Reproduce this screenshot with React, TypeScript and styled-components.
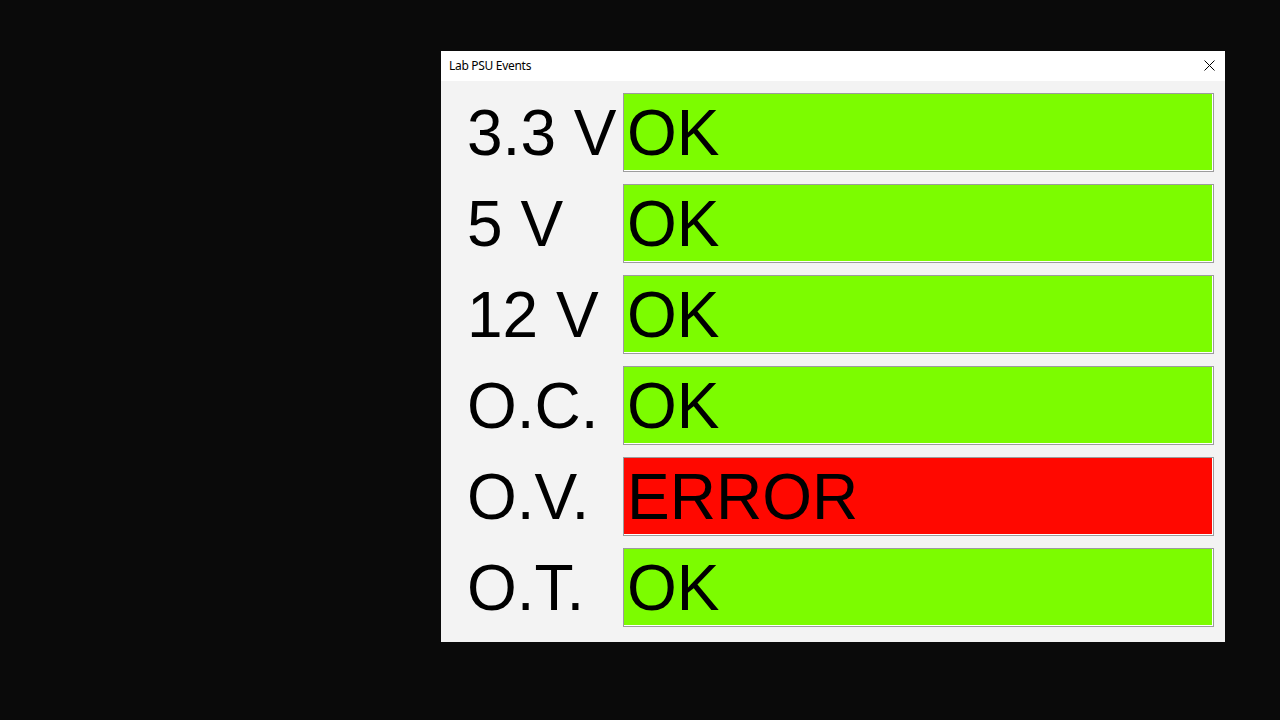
import React from "react";
import styled, { createGlobalStyle } from "styled-components";

const Global = createGlobalStyle`
  html, body { margin: 0; padding: 0; background: #0a0a0a; }
  body { width: 1280px; height: 720px; overflow: hidden; }
`;

const Screen = styled.div`
  width: 1280px;
  height: 720px;
  background: #0a0a0a;
  display: flex;
  align-items: flex-start;
  padding: 51px 0 0 441px;
  box-sizing: border-box;
`;

const Window = styled.div`
  width: 784px;
  height: 591px;
  display: flex;
  flex-direction: column;
  background: #f3f3f3;
`;

const TitleBar = styled.div`
  height: 30px;
  flex: 0 0 30px;
  background: #ffffff;
  display: flex;
  align-items: center;
  justify-content: space-between;
  padding: 0 8px 1px 8px;
  box-sizing: border-box;
`;

const Title = styled.span`
  font-family: "Noto Sans", "Open Sans", sans-serif;
  font-size: 12px;
  color: #000;
  letter-spacing: -0.3px;
`;

const CloseButton = styled.div`
  width: 20px;
  height: 20px;
  display: flex;
  align-items: center;
  justify-content: center;
  margin-right: -2px;
`;

const Body = styled.div`
  flex: 1;
  display: flex;
  flex-direction: column;
  gap: 12px;
  padding: 12px 11px 14px 26px;
  box-sizing: border-box;
`;

const Row = styled.div`
  display: flex;
  align-items: stretch;
  height: 79px;
`;

const Label = styled.div`
  width: 156px;
  flex: 0 0 156px;
  display: flex;
  align-items: center;
  font-family: "Liberation Sans", Arial, sans-serif;
  font-size: 64px;
  color: #000;
  white-space: nowrap;
`;

const Status = styled.div<{ $error?: boolean }>`
  flex: 1;
  display: flex;
  align-items: center;
  background: ${(p) => (p.$error ? "#ff0800" : "#7cfc00")};
  border: 1px solid #9c9c9c;
  box-shadow: inset -1px -1px 0 #ffffff;
  box-sizing: border-box;
  padding: 0 0 0 3px;
  font-family: "Liberation Sans", Arial, sans-serif;
  font-size: 64px;
  color: #000;
  white-space: nowrap;
`;

const rows: { label: string; error?: boolean }[] = [
  { label: "3.3 V" },
  { label: "5 V" },
  { label: "12 V" },
  { label: "O.C." },
  { label: "O.V.", error: true },
  { label: "O.T." },
];

export default function App() {
  return (
    <>
      <Global />
      <Screen>
        <Window>
          <TitleBar>
            <Title>Lab PSU Events</Title>
            <CloseButton>
              <svg width="11" height="11" viewBox="0 0 11 11">
                <path d="M0.5 0.5 L10.5 10.5 M10.5 0.5 L0.5 10.5" stroke="#000" strokeWidth="1" fill="none" />
              </svg>
            </CloseButton>
          </TitleBar>
          <Body>
            {rows.map((r) => (
              <Row key={r.label}>
                <Label>{r.label}</Label>
                <Status $error={r.error}>{r.error ? "ERROR" : "OK"}</Status>
              </Row>
            ))}
          </Body>
        </Window>
      </Screen>
    </>
  );
}
